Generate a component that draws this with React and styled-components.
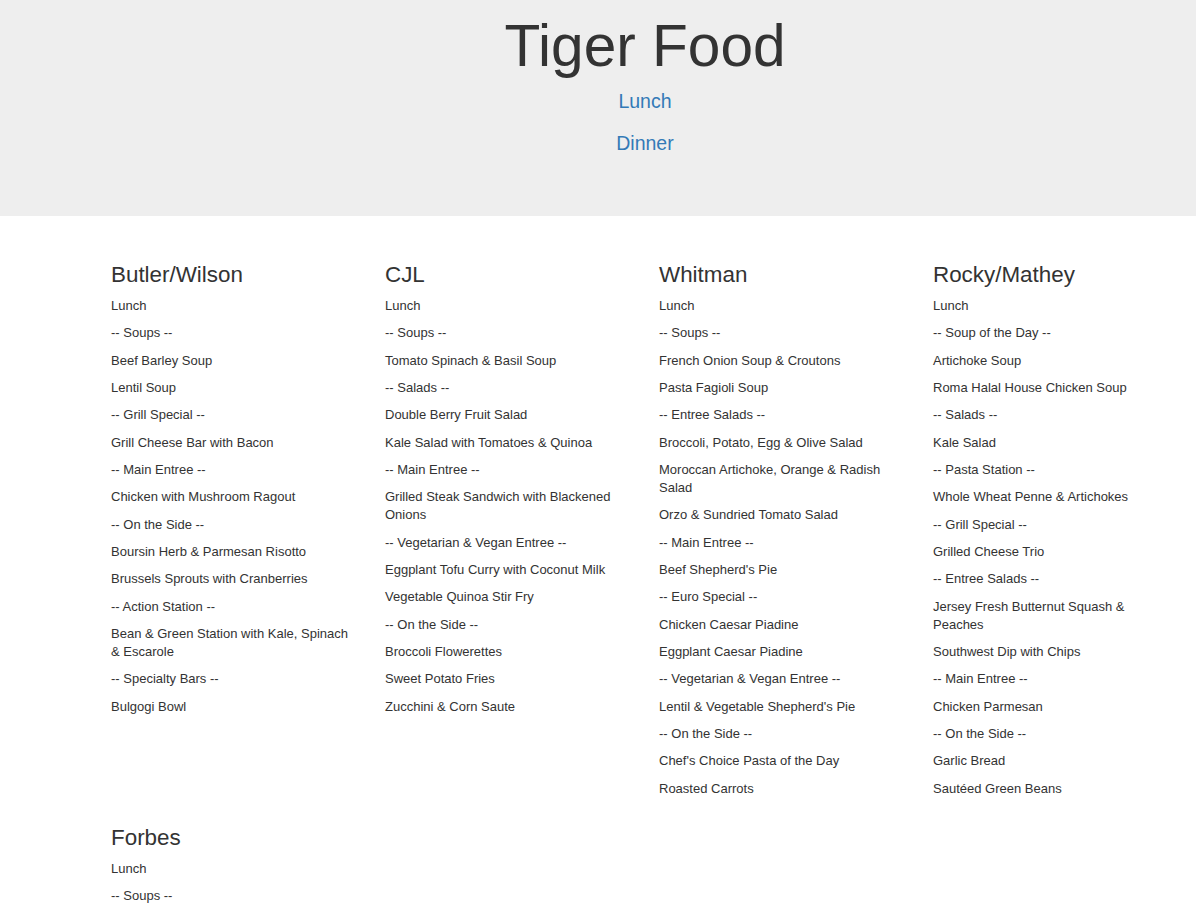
import React from 'react';
import styled, { createGlobalStyle } from 'styled-components';

const GlobalStyle = createGlobalStyle`
  * {
    box-sizing: border-box;
  }
  body {
    margin: 0;
    font-family: "Liberation Sans", Arial, Helvetica, sans-serif;
    font-size: 13px;
    line-height: 18px;
    color: #333;
    background: #fff;
  }
`;

const HALLS = [
  {
    name: 'Butler/Wilson',
    items: [
      'Lunch',
      '-- Soups --',
      'Beef Barley Soup',
      'Lentil Soup',
      '-- Grill Special --',
      'Grill Cheese Bar with Bacon',
      '-- Main Entree --',
      'Chicken with Mushroom Ragout',
      '-- On the Side --',
      'Boursin Herb & Parmesan Risotto',
      'Brussels Sprouts with Cranberries',
      '-- Action Station --',
      'Bean & Green Station with Kale, Spinach & Escarole',
      '-- Specialty Bars --',
      'Bulgogi Bowl',
    ],
  },
  {
    name: 'CJL',
    items: [
      'Lunch',
      '-- Soups --',
      'Tomato Spinach & Basil Soup',
      '-- Salads --',
      'Double Berry Fruit Salad',
      'Kale Salad with Tomatoes & Quinoa',
      '-- Main Entree --',
      'Grilled Steak Sandwich with Blackened Onions',
      '-- Vegetarian & Vegan Entree --',
      'Eggplant Tofu Curry with Coconut Milk',
      'Vegetable Quinoa Stir Fry',
      '-- On the Side --',
      'Broccoli Flowerettes',
      'Sweet Potato Fries',
      'Zucchini & Corn Saute',
    ],
  },
  {
    name: 'Whitman',
    items: [
      'Lunch',
      '-- Soups --',
      'French Onion Soup & Croutons',
      'Pasta Fagioli Soup',
      '-- Entree Salads --',
      'Broccoli, Potato, Egg & Olive Salad',
      'Moroccan Artichoke, Orange & Radish Salad',
      'Orzo & Sundried Tomato Salad',
      '-- Main Entree --',
      "Beef Shepherd's Pie",
      '-- Euro Special --',
      'Chicken Caesar Piadine',
      'Eggplant Caesar Piadine',
      '-- Vegetarian & Vegan Entree --',
      "Lentil & Vegetable Shepherd's Pie",
      '-- On the Side --',
      "Chef's Choice Pasta of the Day",
      'Roasted Carrots',
    ],
  },
  {
    name: 'Rocky/Mathey',
    items: [
      'Lunch',
      '-- Soup of the Day --',
      'Artichoke Soup',
      'Roma Halal House Chicken Soup',
      '-- Salads --',
      'Kale Salad',
      '-- Pasta Station --',
      'Whole Wheat Penne & Artichokes',
      '-- Grill Special --',
      'Grilled Cheese Trio',
      '-- Entree Salads --',
      'Jersey Fresh Butternut Squash & Peaches',
      'Southwest Dip with Chips',
      '-- Main Entree --',
      'Chicken Parmesan',
      '-- On the Side --',
      'Garlic Bread',
      'Sautéed Green Beans',
    ],
  },
  {
    name: 'Forbes',
    items: ['Lunch', '-- Soups --'],
  },
];

const Jumbotron = styled.header`
  background-color: #eee;
  padding: 14px 0 45px;
  margin-bottom: 28px;
`;

const Container = styled.div`
  width: 1096px;
  margin-left: 97px;
`;

const Title = styled.h1`
  margin: 0 0 9px;
  font-size: 58.6px;
  line-height: 1.1;
  font-weight: 500;
  text-align: center;
  color: #333;
`;

const NavLine = styled.p`
  margin: 0 0 14px;
  font-size: 19.5px;
  line-height: 28px;
  font-weight: 200;
  text-align: center;
`;

const NavLink = styled.a`
  color: #337ab7;
  text-decoration: none;
`;

const Content = styled.div`
  width: 1096px;
  margin-left: 96px;
`;

const HallGrid = styled.div`
  display: grid;
  grid-template-columns: repeat(4, 1fr);
`;

const HallColumn = styled.section`
  padding: 0 15px;
`;

const HallName = styled.h3`
  margin: 18.6px 0 9.3px;
  font-size: 22.4px;
  line-height: 1.1;
  font-weight: 500;
  color: #333;
`;

const MenuItem = styled.p`
  margin: 0 0 9.35px;
  font-size: 13px;
  line-height: 18px;
`;

const App = () => {
  return (
    <>
      <GlobalStyle />
      <Jumbotron>
        <Container>
          <Title>Tiger Food</Title>
          <NavLine>
            <NavLink href="#lunch">Lunch</NavLink>
          </NavLine>
          <NavLine>
            <NavLink href="#dinner">Dinner</NavLink>
          </NavLine>
        </Container>
      </Jumbotron>
      <Content>
        <HallGrid>
          {HALLS.map((hall) => (
            <HallColumn key={hall.name}>
              <HallName>{hall.name}</HallName>
              {hall.items.map((item, i) => (
                <MenuItem key={i}>{item}</MenuItem>
              ))}
            </HallColumn>
          ))}
        </HallGrid>
      </Content>
    </>
  );
};

export default App;
